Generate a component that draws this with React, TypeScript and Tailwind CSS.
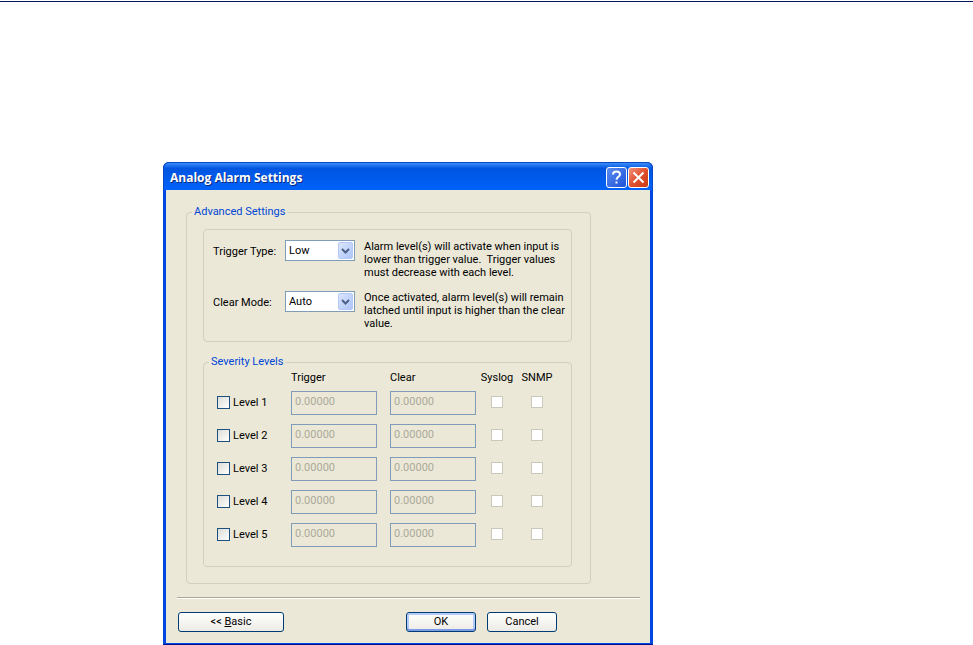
import { useState } from "react";
import type { ReactNode } from "react";

const levels = [1, 2, 3, 4, 5];

type PickerProps = {
  id: string;
  label: string;
  options: string[];
  children: ReactNode;
};

function Picker({ id, label, options, children }: PickerProps) {
  return (
    <div className="flex items-start">
      <label htmlFor={id} className="w-[72px] shrink-0 pt-1 leading-4">
        {label}
      </label>
      <div className="relative w-[70px] shrink-0">
        <select
          id={id}
          className="block h-[21px] w-full appearance-none border border-[#7f9db9] bg-white pt-[2px] pl-[3px] outline-none"
        >
          {options.map((option) => (
            <option key={option}>{option}</option>
          ))}
        </select>
        <span className="pointer-events-none absolute top-[2px] right-[2px] flex h-[17px] w-[15px] items-center justify-center rounded-xs border border-[#b5c8f5] bg-linear-to-br from-[#dbe5fe] to-[#aec5f8]">
          <svg width="9" height="6" viewBox="0 0 9 6" fill="none">
            <path d="M1 1L4.5 4.5L8 1" stroke="#4d6185" strokeWidth="2" />
          </svg>
        </span>
      </div>
      <p className="ml-[9px] leading-[13px] whitespace-pre">{children}</p>
    </div>
  );
}

function LevelRow({ level }: { level: number }) {
  const [enabled, setEnabled] = useState(false);

  return (
    <tr className="h-[33px] align-top">
      <td>
        <label className="flex items-center gap-[3px] pt-[5px]">
          <input
            type="checkbox"
            checked={enabled}
            onChange={() => setEnabled(!enabled)}
            className="size-[13px] appearance-none border border-[#1c5180] bg-linear-to-br from-[#dcdcd7] to-white checked:bg-[#21a121]"
          />
          <span className="leading-[13px]">Level {level}</span>
        </label>
      </td>
      {["Trigger", "Clear"].map((name) => (
        <td key={name}>
          <input
            type="text"
            aria-label={`Level ${level} ${name}`}
            defaultValue="0.00000"
            disabled={!enabled}
            className="block h-6 w-[86px] border border-[#7f9db9] pb-1 pl-[3px] disabled:text-[#aca899]"
          />
        </td>
      ))}
      {["Syslog", "SNMP"].map((name) => (
        <td key={name} className="pt-[5px]">
          <input
            type="checkbox"
            aria-label={`Level ${level} ${name}`}
            disabled={!enabled}
            className="mx-auto block size-3 appearance-none border border-[#cac8bb] bg-white checked:bg-[#21a121]"
          />
        </td>
      ))}
    </tr>
  );
}

export default function App() {
  return (
    <div className="min-h-screen bg-white pt-px font-['Roboto','Liberation_Sans',sans-serif] text-[11px] text-black">
      <hr className="border-t border-[#001a5e]" />
      <div className="mt-40 ml-[163px] w-full max-w-[490px] rounded-t-md border-b border-[#00138c] bg-[#0046e0] px-[3px] pb-px">
        <header className="-mx-[3px] flex h-7 items-center justify-between rounded-t-md border-x border-t border-[#0a48c8] bg-linear-to-b from-[#3a8cf8] via-[#0055e0] via-20% to-[#0062fa] pr-[3px] pl-1.5">
          <h1 className="pt-[2px] font-['Open_Sans',sans-serif] text-[12px] font-bold text-white [text-shadow:1px_1px_#0a2a80]">
            Analog Alarm Settings
          </h1>
          <div className="flex gap-px pt-px">
            <button
              aria-label="Help"
              className="flex size-[21px] items-center justify-center rounded-[3px] border border-white bg-linear-to-br from-[#5c8cf0] to-[#1c50d8]"
            >
              <svg width="13" height="15" viewBox="0 0 13 15" fill="none">
                <path
                  d="M3 4.5C3 2.5 4.5 1.5 6.5 1.5S10 2.6 10 4.4C10 6.8 6.5 6.8 6.5 9.8"
                  stroke="white"
                  strokeWidth="2"
                />
                <path d="M5.5 11.5h2v2h-2z" fill="white" />
              </svg>
            </button>
            <button
              aria-label="Close"
              className="flex size-[21px] items-center justify-center rounded-[3px] border border-white bg-linear-to-br from-[#f09078] via-[#e0502c] to-[#c83c14]"
            >
              <svg width="13" height="13" viewBox="0 0 13 13" fill="none">
                <path
                  d="M1.5 1.5L11.5 11.5M11.5 1.5L1.5 11.5"
                  stroke="white"
                  strokeWidth="2"
                />
              </svg>
            </button>
          </div>
        </header>

        <main className="bg-[#ebe8d8] px-[11px] pt-[14px] pb-[11px]">
          <fieldset className="mr-[48px] ml-[9px] rounded border border-[#d0d0bf] pr-[18px] pb-4 pl-4">
            <legend className="-ml-[11px] px-[2px] leading-4 text-[#0046d5]">
              Advanced Settings
            </legend>

            <div className="mt-[9px] flex flex-col gap-3 rounded border border-[#d0d0bf] pt-[10px] pb-[11px] pl-[9px]">
              <Picker
                id="trigger-type"
                label="Trigger Type:"
                options={["Low", "High"]}
              >
                {"Alarm level(s) will activate when input is\nlower than trigger value.  Trigger values\nmust decrease with each level."}
              </Picker>
              <Picker
                id="clear-mode"
                label="Clear Mode:"
                options={["Auto", "Manual"]}
              >
                {"Once activated, alarm level(s) will remain\nlatched until input is higher than the clear\nvalue."}
              </Picker>
            </div>

            <fieldset className="mt-3 rounded border border-[#d0d0bf] pb-[10px] pl-[13px]">
              <legend className="-ml-2 px-[2px] leading-4 text-[#0046d5]">
                Severity Levels
              </legend>
              <table className="w-[340px] table-fixed border-collapse">
                <thead>
                  <tr className="h-[21px] text-left align-top leading-4 [&>th]:font-normal">
                    <td className="w-[74px]" />
                    <th className="w-[99px]">Trigger</th>
                    <th className="w-[87px]">Clear</th>
                    <th className="w-10 text-center">Syslog</th>
                    <th className="w-10 text-center">SNMP</th>
                  </tr>
                </thead>
                <tbody>
                  {levels.map((level) => (
                    <LevelRow key={level} level={level} />
                  ))}
                </tbody>
              </table>
            </fieldset>
          </fieldset>

          <hr className="mt-[13px] -mr-px h-[2px] border-t border-b border-t-[#aca899] border-b-white" />

          <div className="mt-[13px] flex gap-[11px] pr-[82px] pl-px [&>button]:h-5 [&>button]:rounded-[3px] [&>button]:border [&>button]:border-[#003c74] [&>button]:bg-linear-to-b [&>button]:from-white [&>button]:to-[#ecebe5]">
            <button className="mr-auto w-[106px]">
              &lt;&lt; <u>B</u>asic
            </button>
            <button className="w-[70px] shadow-[inset_0_-2px_#7d9ae8,inset_0_0_0_2px_#b4caf8]">
              OK
            </button>
            <button className="w-[70px]">Cancel</button>
          </div>
        </main>
      </div>
    </div>
  );
}
